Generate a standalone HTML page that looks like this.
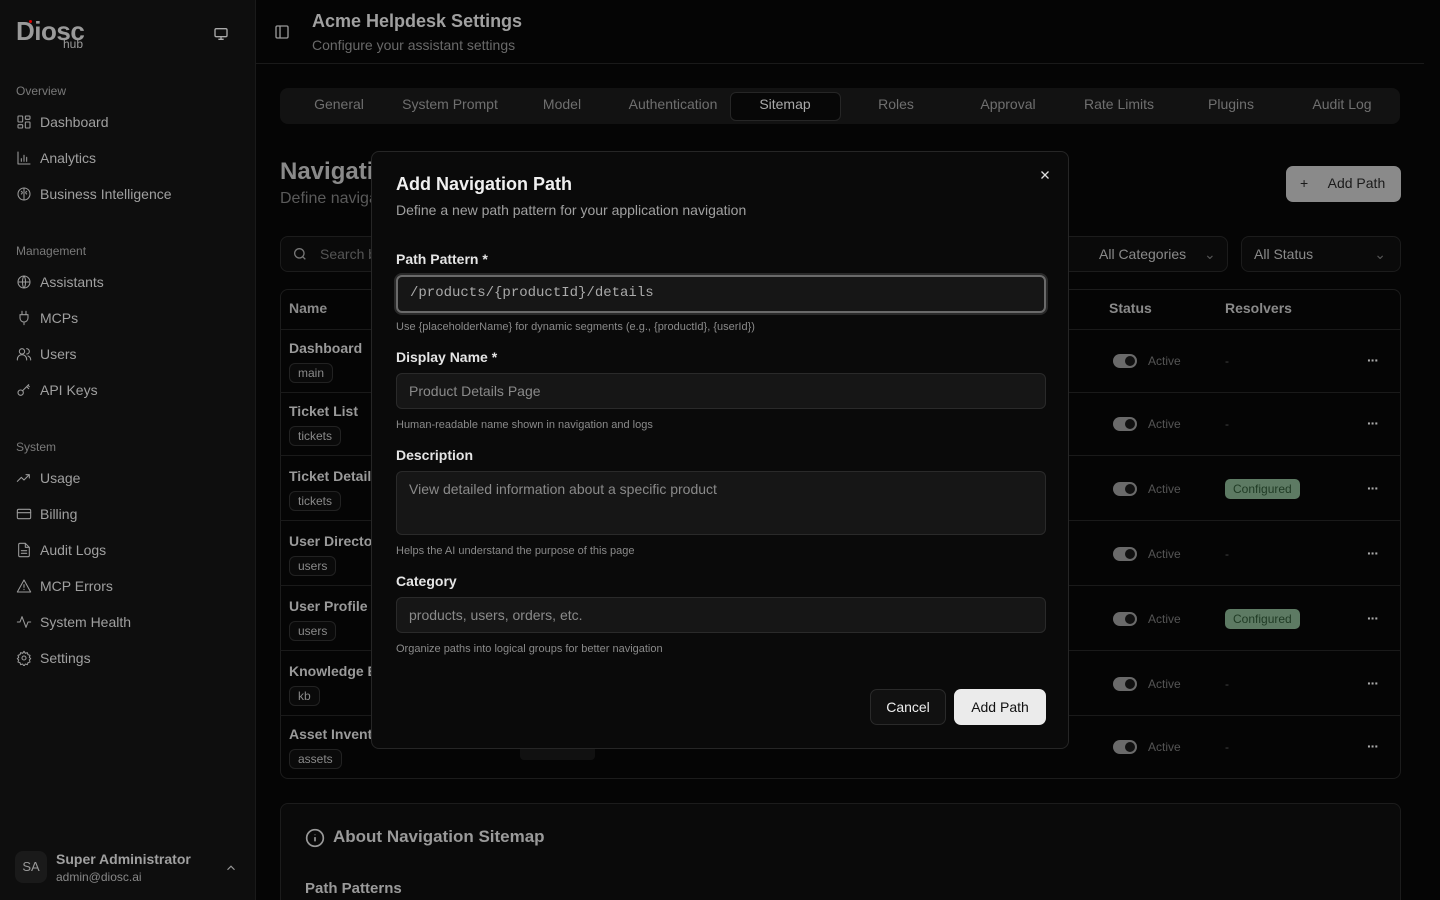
<!DOCTYPE html>
<html style="overflow:hidden;height:900px"><head><meta charset="utf-8"><style>
*{box-sizing:border-box;margin:0;padding:0}
body{width:1440px;height:900px;overflow:hidden;background:#050505;font-family:"Liberation Sans",sans-serif;color:#a3a3a3;position:relative}
.abs{position:absolute}
.side{left:0;top:0;width:256px;height:900px;background:#0e0e0e;border-right:1px solid #1a1a1a}
.sec{position:absolute;left:16px;font-size:12px;color:#7a7a7a}
.item{position:absolute;left:16px;font-size:14px;color:#a0a0a0;display:flex;align-items:center;gap:8px}
.item svg{width:16px;height:16px;stroke:#9a9a9a;fill:none;stroke-width:1.6;stroke-linecap:round;stroke-linejoin:round}
.tab{position:absolute;top:96px;font-size:14px;color:#6f6f6f;width:112px;text-align:center}
.card{border:1px solid #1c1c1c;border-radius:8px}
.row{position:absolute;left:280px;width:1120px;border-top:1px solid #1a1a1a}
.nm{position:absolute;left:9px;font-size:14px;color:#9a9a9a;font-weight:bold}
.tag{position:absolute;left:9px;font-size:12px;color:#8a8a8a;border:1px solid #222;border-radius:6px;padding:2px 8px;background:#0a0a0a}
.tg{position:absolute;left:833px;width:24px;height:14px;border-radius:7px;background:#6a6a6a}
.tg:after{content:"";position:absolute;right:2px;top:2px;width:10px;height:10px;border-radius:5px;background:#111}
.act{position:absolute;left:868px;font-size:12px;color:#555}
.dash{position:absolute;left:945px;font-size:12px;color:#444}
.dots{position:absolute;left:1087px;font-size:14px;color:#aaa;letter-spacing:-1px;font-weight:bold}
.cfg{position:absolute;left:945px;font-size:12px;color:#1f3a24;background:#5d7a63;border-radius:5px;padding:3px 8px}
.modal{left:371px;top:151px;width:698px;height:598px;background:#0a0a0a;border:1px solid #262626;border-radius:8px}
.lbl{position:absolute;left:24px;font-size:14px;color:#e5e5e5;font-weight:bold}
.inp{position:absolute;left:24px;width:650px;height:36px;background:#161616;border:1px solid #2a2a2a;border-radius:6px;font-size:14px;color:#8a8a8a;padding:9px 12px}
.hint{position:absolute;left:24px;font-size:11px;color:#8a8a8a}
</style></head><body>
<div class="abs side">
 <div class="abs" style="left:16px;top:16px;font-size:26px;color:#9a9a9a;font-weight:bold;letter-spacing:-0.5px">Diosc</div>
 <div class="abs" style="left:29px;top:20px;width:3px;height:3px;background:#d00;border-radius:2px"></div>
 <div class="abs" style="left:63px;top:37px;font-size:12px;color:#9a9a9a">hub</div>
 <svg class="abs" style="left:213px;top:26px" width="16" height="16" viewBox="0 0 24 24" fill="none" stroke="#aaa" stroke-width="2"><rect x="3" y="4" width="18" height="12" rx="2"/><path d="M12 16v4M8 20h8"/></svg>
 <div class="sec" style="top:84px">Overview</div>
 <div class="item" style="top:114px"><svg viewBox="0 0 24 24"><rect x="3" y="3" width="7" height="9" rx="1"/><rect x="14" y="3" width="7" height="5" rx="1"/><rect x="14" y="12" width="7" height="9" rx="1"/><rect x="3" y="16" width="7" height="5" rx="1"/></svg>Dashboard</div>
 <div class="item" style="top:150px"><svg viewBox="0 0 24 24"><path d="M3 3v18h18M8 17v-4M12 17V8M16 17v-6"/></svg>Analytics</div>
 <div class="item" style="top:186px"><svg viewBox="0 0 24 24"><circle cx="12" cy="12" r="9"/><path d="M12 3v18M8 8c2 1 2 3 0 4M16 8c-2 1-2 3 0 4"/></svg>Business Intelligence</div>
 <div class="sec" style="top:244px">Management</div>
 <div class="item" style="top:274px"><svg viewBox="0 0 24 24"><circle cx="12" cy="12" r="9"/><path d="M3 12h18M12 3c3 3 3 15 0 18M12 3c-3 3-3 15 0 18"/></svg>Assistants</div>
 <div class="item" style="top:310px"><svg viewBox="0 0 24 24"><path d="M9 2v5M15 2v5M6 7h12v5a6 6 0 0 1-12 0zM12 18v4"/></svg>MCPs</div>
 <div class="item" style="top:346px"><svg viewBox="0 0 24 24"><circle cx="9" cy="8" r="4"/><path d="M2 21v-1a6 6 0 0 1 14 0v1M16 4a4 4 0 0 1 0 8M22 21v-1a6 6 0 0 0-4-5"/></svg>Users</div>
 <div class="item" style="top:382px"><svg viewBox="0 0 24 24"><circle cx="7" cy="16" r="4"/><path d="M10 13l9-9M16 7l3 3M18 5l2 2"/></svg>API Keys</div>
 <div class="sec" style="top:440px">System</div>
 <div class="item" style="top:470px"><svg viewBox="0 0 24 24"><path d="M2 17l6-6 4 4 8-8M15 7h5v5"/></svg>Usage</div>
 <div class="item" style="top:506px"><svg viewBox="0 0 24 24"><rect x="2" y="5" width="20" height="14" rx="2"/><path d="M2 10h20"/></svg>Billing</div>
 <div class="item" style="top:542px"><svg viewBox="0 0 24 24"><path d="M14 2H6a2 2 0 0 0-2 2v16a2 2 0 0 0 2 2h12a2 2 0 0 0 2-2V8zM14 2v6h6M8 13h8M8 17h8"/></svg>Audit Logs</div>
 <div class="item" style="top:578px"><svg viewBox="0 0 24 24"><path d="M12 3L2 21h20zM12 10v4M12 17v.5"/></svg>MCP Errors</div>
 <div class="item" style="top:614px"><svg viewBox="0 0 24 24"><path d="M2 12h4l3-8 6 16 3-8h4"/></svg>System Health</div>
 <div class="item" style="top:650px"><svg viewBox="0 0 24 24"><circle cx="12" cy="12" r="3"/><path d="M12 2l2 3 3-1 1 3 3 1-1 3 2 2-2 2 1 3-3 1-1 3-3-1-2 3-2-3-3 1-1-3-3-1 1-3-2-2 2-2-1-3 3-1 1-3 3 1z"/></svg>Settings</div>
 <div class="abs" style="left:15px;top:851px;width:32px;height:32px;border-radius:8px;background:#1a1a1a;color:#999;font-size:13px;text-align:center;line-height:32px">SA</div>
 <div class="abs" style="left:56px;top:851px;font-size:14px;color:#a0a0a0;font-weight:bold">Super Administrator</div>
 <div class="abs" style="left:56px;top:870px;font-size:12px;color:#888">admin@diosc.ai</div>
 <svg class="abs" style="left:224px;top:861px" width="14" height="14" viewBox="0 0 24 24" fill="none" stroke="#999" stroke-width="2"><path d="M6 15l6-6 6 6"/></svg>
</div>
<svg class="abs" style="left:274px;top:24px" width="16" height="16" viewBox="0 0 24 24" fill="none" stroke="#999" stroke-width="2"><rect x="3" y="3" width="18" height="18" rx="2"/><path d="M9 3v18"/></svg>
<div class="abs" style="left:312px;top:11px;font-size:18px;font-weight:bold;color:#a0a0a0">Acme Helpdesk Settings</div>
<div class="abs" style="left:312px;top:37px;font-size:14px;color:#6a6a6a">Configure your assistant settings</div>
<div class="abs" style="left:256px;top:63px;width:1168px;height:1px;background:#1a1a1a"></div>
<div class="abs" style="left:280px;top:88px;width:1120px;height:36px;background:#121212;border-radius:8px"></div>
<div class="abs" style="left:730px;top:92px;width:111px;height:29px;border:1px solid #262626;border-radius:6px;background:#070707"></div>
<div class="tab" style="left:283px">General</div><div class="tab" style="left:394px">System Prompt</div><div class="tab" style="left:506px">Model</div><div class="tab" style="left:617px">Authentication</div><div class="tab" style="left:729px;color:#aaa">Sitemap</div><div class="tab" style="left:840px">Roles</div><div class="tab" style="left:952px">Approval</div><div class="tab" style="left:1063px">Rate Limits</div><div class="tab" style="left:1175px">Plugins</div><div class="tab" style="left:1286px">Audit Log</div>
<div class="abs" style="left:280px;top:158px;font-size:24px;font-weight:bold;color:#8a8a8a">Navigation Sitemap</div>
<div class="abs" style="left:280px;top:190px;font-size:16px;color:#5a5a5a;white-space:nowrap">Define navigation paths that your AI assistant can use to help users navigate your application routes.</div>
<div class="abs" style="left:1286px;top:166px;width:115px;height:36px;background:#8a8a8a;border-radius:7px;color:#1a1a1a;font-size:14px;padding:9px 0 0 14px">+&nbsp;&nbsp;&nbsp;&nbsp;&nbsp;Add Path</div>
<div class="abs card" style="left:280px;top:236px;width:750px;height:36px;background:#0a0a0a"></div>
<svg class="abs" style="left:292px;top:246px" width="16" height="16" viewBox="0 0 24 24" fill="none" stroke="#777" stroke-width="2"><circle cx="11" cy="11" r="7"/><path d="M20 20l-4-4"/></svg>
<div class="abs" style="left:320px;top:246px;font-size:14px;color:#555">Search by name, path or description...</div>
<div class="abs card" style="left:1040px;top:236px;width:188px;height:36px;background:#0a0a0a;font-size:14px;color:#8a8a8a;padding:9px 0 0 58px">All Categories <span style="margin-left:14px;color:#555">⌄</span></div>
<div class="abs card" style="left:1241px;top:236px;width:160px;height:36px;background:#0a0a0a;font-size:14px;color:#8a8a8a;padding:9px 0 0 12px">All Status<span style="position:absolute;right:14px;color:#555">⌄</span></div>
<div class="abs card" style="left:280px;top:289px;width:1121px;height:490px"></div>
<div class="abs" style="left:289px;top:300px;font-size:14px;font-weight:bold;color:#8a8a8a">Name</div>
<div class="abs" style="left:1109px;top:300px;font-size:14px;font-weight:bold;color:#8a8a8a">Status</div>
<div class="abs" style="left:1225px;top:300px;font-size:14px;font-weight:bold;color:#8a8a8a">Resolvers</div>
<div class="row" style="top:329px;height:63px"><div class="nm" style="top:10px">Dashboard</div><div class="tag" style="top:33px">main</div><div class="tg" style="top:24px"></div><div class="act" style="top:24px">Active</div><div class="dash" style="top:24px">-</div><div class="dots" style="top:22px">···</div></div>
<div class="row" style="top:392px;height:63px"><div class="nm" style="top:10px">Ticket List</div><div class="tag" style="top:33px">tickets</div><div class="tg" style="top:24px"></div><div class="act" style="top:24px">Active</div><div class="dash" style="top:24px">-</div><div class="dots" style="top:22px">···</div></div>
<div class="row" style="top:455px;height:65px"><div class="nm" style="top:12px">Ticket Details</div><div class="tag" style="top:35px">tickets</div><div class="tg" style="top:26px"></div><div class="act" style="top:26px">Active</div><div class="cfg" style="top:23px">Configured</div><div class="dots" style="top:24px">···</div></div>
<div class="row" style="top:520px;height:65px"><div class="nm" style="top:12px">User Directory</div><div class="tag" style="top:35px">users</div><div class="tg" style="top:26px"></div><div class="act" style="top:26px">Active</div><div class="dash" style="top:26px">-</div><div class="dots" style="top:24px">···</div></div>
<div class="row" style="top:585px;height:65px"><div class="nm" style="top:12px">User Profile</div><div class="tag" style="top:35px">users</div><div class="tg" style="top:26px"></div><div class="act" style="top:26px">Active</div><div class="cfg" style="top:23px">Configured</div><div class="dots" style="top:24px">···</div></div>
<div class="row" style="top:650px;height:65px"><div class="nm" style="top:12px">Knowledge Base</div><div class="tag" style="top:35px">kb</div><div class="tg" style="top:26px"></div><div class="act" style="top:26px">Active</div><div class="dash" style="top:26px">-</div><div class="dots" style="top:24px">···</div></div>
<div class="row" style="top:715px;height:63px"><div class="nm" style="top:10px">Asset Inventory</div><div class="tag" style="top:33px">assets</div><div class="abs" style="left:240px;top:22px;width:75px;height:22px;background:#111;border-radius:4px"></div><div class="tg" style="top:24px"></div><div class="act" style="top:24px">Active</div><div class="dash" style="top:24px">-</div><div class="dots" style="top:22px">···</div></div>
<div class="abs card" style="left:280px;top:803px;width:1121px;height:97px;background:#0a0a0a;border-bottom:none;border-radius:8px 8px 0 0"></div>
<svg class="abs" style="left:305px;top:828px" width="20" height="20" viewBox="0 0 24 24" fill="none" stroke="#999" stroke-width="2"><circle cx="12" cy="12" r="10"/><path d="M12 16v-5M12 8v.5"/></svg>
<div class="abs" style="left:333px;top:827px;font-size:17px;font-weight:bold;color:#9a9a9a">About Navigation Sitemap</div>
<div class="abs" style="left:305px;top:880px;font-size:15px;font-weight:bold;color:#9a9a9a">Path Patterns</div>

<div class="abs modal">
 <div class="abs" style="left:24px;top:22px;font-size:18px;font-weight:bold;color:#f0f0f0">Add Navigation Path</div>
 <div class="abs" style="left:24px;top:50px;font-size:14px;color:#a0a0a0">Define a new path pattern for your application navigation</div>
 <svg class="abs" style="left:666px;top:16px" width="14" height="14" viewBox="0 0 24 24" fill="none" stroke="#ddd" stroke-width="2.2"><path d="M6 6l12 12M18 6L6 18"/></svg>
 <div class="lbl" style="top:99px">Path Pattern *</div>
 <div class="inp" style="top:123px;height:38px;border:2px solid #6a6a6a;box-shadow:0 0 0 2px #2a2a2a;font-family:'Liberation Mono',monospace;color:#aaa;padding:8px 12px">/products/{productId}/details</div>
 <div class="hint" style="top:169px">Use {placeholderName} for dynamic segments (e.g., {productId}, {userId})</div>
 <div class="lbl" style="top:197px">Display Name *</div>
 <div class="inp" style="top:221px">Product Details Page</div>
 <div class="hint" style="top:267px">Human-readable name shown in navigation and logs</div>
 <div class="lbl" style="top:295px">Description</div>
 <div class="inp" style="top:319px;height:64px">View detailed information about a specific product</div>
 <div class="hint" style="top:393px">Helps the AI understand the purpose of this page</div>
 <div class="lbl" style="top:421px">Category</div>
 <div class="inp" style="top:445px">products, users, orders, etc.</div>
 <div class="hint" style="top:491px">Organize paths into logical groups for better navigation</div>
 <div class="abs" style="left:498px;top:537px;width:76px;height:36px;border:1px solid #2a2a2a;background:#111;border-radius:7px;color:#eee;font-size:14px;text-align:center;line-height:34px">Cancel</div>
 <div class="abs" style="left:582px;top:537px;width:92px;height:36px;background:#ebebeb;border-radius:7px;color:#111;font-size:14px;text-align:center;line-height:36px">Add Path</div>
</div>
</body></html>
